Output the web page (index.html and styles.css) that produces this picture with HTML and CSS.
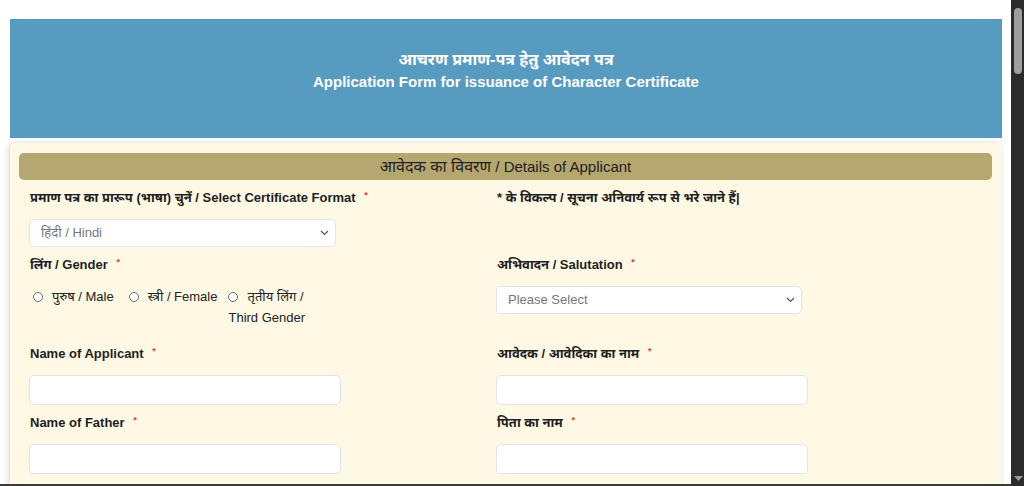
FILE: index.html
```html
<!DOCTYPE html>
<html lang="hi">
<head>
<meta charset="utf-8">
<title>आचरण प्रमाण-पत्र हेतु आवेदन पत्र</title>
<link rel="stylesheet" href="styles.css">
</head>
<body>
<div class="window">
  <main class="page">
    <header class="banner">
      <div class="banner-hi">आचरण प्रमाण-पत्र हेतु आवेदन पत्र</div>
      <div class="banner-en">Application Form for issuance of Character Certificate</div>
    </header>

    <section class="card">
      <div class="section-bar"><span class="hi-lg">आवेदक का विवरण</span> / Details of Applicant</div>

      <div class="grid">
        <div class="field">
          <div class="label">प्रमाण पत्र का प्रारूप (भाषा) चुनें / Select Certificate Format <span class="req">*</span></div>
          <div class="select select-sm">
            <span class="select-text">हिंदी / Hindi</span>
            <svg class="chev" width="9" height="6" viewBox="0 0 9 6"><path d="M1 1 L4.5 4.5 L8 1" fill="none" stroke="#555" stroke-width="1.2"/></svg>
          </div>
        </div>
        <div class="field">
          <div class="label">* के विकल्प / सूचना अनिवार्य रूप से भरे जाने हैं|</div>
        </div>

        <div class="field">
          <div class="label">लिंग / Gender <span class="req">*</span></div>
          <div class="radios">
            <label class="opt opt-1"><span class="radio"></span>पुरुष / Male</label>
            <label class="opt opt-2"><span class="radio"></span>स्त्री / Female</label>
            <label class="opt opt-3"><span class="radio"></span>तृतीय लिंग / Third Gender</label>
          </div>
        </div>
        <div class="field">
          <div class="label">अभिवादन / Salutation <span class="req">*</span></div>
          <div class="select">
            <span class="select-text">Please Select</span>
            <svg class="chev" width="9" height="6" viewBox="0 0 9 6"><path d="M1 1 L4.5 4.5 L8 1" fill="none" stroke="#555" stroke-width="1.2"/></svg>
          </div>
        </div>

        <div class="field">
          <div class="label">Name of Applicant <span class="req">*</span></div>
          <input class="input" type="text">
        </div>
        <div class="field">
          <div class="label">आवेदक / आवेदिका का नाम <span class="req">*</span></div>
          <input class="input" type="text">
        </div>

        <div class="field">
          <div class="label">Name of Father <span class="req">*</span></div>
          <input class="input" type="text">
        </div>
        <div class="field">
          <div class="label">पिता का नाम <span class="req">*</span></div>
          <input class="input" type="text">
        </div>
      </div>
    </section>
  </main>
  <aside class="scrollbar">
    <div class="thumb"></div>
    <svg class="arrow" width="9" height="5" viewBox="0 0 9 5"><path d="M0 0 H9 L4.5 5 Z" fill="#9a9a9a"/></svg>
  </aside>
</div>
</body>
</html>
```

FILE: styles.css
```css
* { box-sizing: border-box; }

html, body {
  margin: 0;
  padding: 0;
  height: 100%;
  overflow: hidden;
  background: #ffffff;
}

body {
  font-family: "Liberation Sans", Arial, "Noto Sans", sans-serif;
  color: #222;
}

.window {
  display: flex;
  height: 486px;
}

.page {
  flex: 1;
  height: 486px;
  overflow: hidden;
  padding: 19px 9px 0 10px;
  border-bottom: 2px solid #3a3a3a;
}

.banner {
  height: 119px;
  background: #589bc0;
  color: #fff;
  text-align: center;
  padding-top: 30px;
}

.banner-hi {
  font-size: 16px;
  font-weight: bold;
  line-height: 22px;
}

.banner-en {
  font-size: 15px;
  font-weight: bold;
  line-height: 22px;
}

.card {
  margin-top: 5px;
  background: #fef9e4;
  border-radius: 4px;
  box-shadow: -2px 0 6px rgba(0, 0, 0, 0.12), 0 0 2px rgba(0, 0, 0, 0.08);
  padding: 10px 10px 60px 9px;
}

.section-bar {
  height: 27px;
  line-height: 27px;
  background: #b5a770;
  border-radius: 5px;
  text-align: center;
  font-size: 15px;
  color: #222;
}

.hi-lg {
  font-size: 16px;
}

.grid {
  display: grid;
  grid-template-columns: 467px 467px;
  padding: 7px 0 0 10px;
}

.field {
  padding-bottom: 7px;
}

.label {
  font-size: 13px;
  font-weight: bold;
  line-height: 22px;
  height: 20px;
  margin-bottom: 12px;
  padding-left: 1px;
  white-space: nowrap;
  color: #1f1f1f;
}

.req {
  color: #e53935;
  font-size: 9px;
  vertical-align: top;
  line-height: 16px;
  margin-left: 5px;
}

.select {
  width: 306px;
  height: 28px;
  background: #fff;
  border: 1px solid #e3e3e3;
  border-radius: 5px;
  display: flex;
  align-items: center;
  justify-content: space-between;
  padding: 0 6px 0 11px;
  font-size: 13px;
  color: #777;
}

.select-sm {
  width: 307px;
}

.select-text {
  line-height: 20px;
}

.chev {
  display: block;
}

.input {
  display: block;
  width: 312px;
  height: 30px;
  background: #fff;
  border: 1px solid #e3e3e3;
  border-radius: 5px;
  margin: 0;
  padding: 0 10px;
  font: inherit;
}

.radios {
  display: flex;
  width: 312px;
  font-size: 13px;
  line-height: 21px;
  color: #222;
  margin-bottom: 8px;
}

.opt {
  display: block;
}

.opt-1 {
  flex: 0 0 auto;
  padding-left: 4px;
  margin-right: 15px;
}

.opt-2 {
  flex: 0 0 auto;
  margin-right: 11px;
}

.opt-3 {
  flex: 0 0 82px;
  min-width: 0;
}

.radio {
  display: inline-block;
  width: 10px;
  height: 10px;
  border: 1px solid #6e6e6e;
  border-radius: 50%;
  background: #fff;
  margin-right: 9px;
  vertical-align: -1px;
}

.scrollbar {
  width: 13px;
  height: 486px;
  background: #2b2b2b;
  display: flex;
  flex-direction: column;
  align-items: center;
  justify-content: space-between;
  padding: 8px 0 5px 1px;
}

.thumb {
  width: 8px;
  height: 66px;
  background: #9e9e9e;
  border-radius: 4px;
}

.arrow {
  display: block;
}
```
